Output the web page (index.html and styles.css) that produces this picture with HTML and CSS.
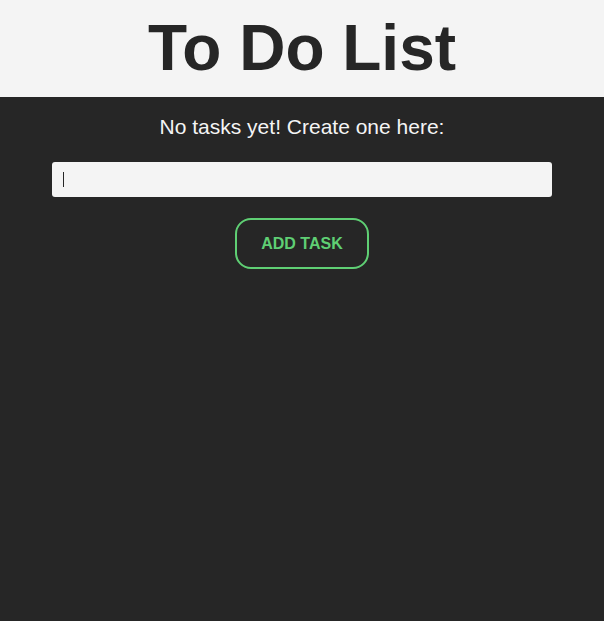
FILE: index.html
```html
<!DOCTYPE html>
<html>
<head>
<meta charset="utf-8">
<link rel="stylesheet" href="styles.css">
</head>
<body>
<header class="header">
  <h1 class="title">To Do List</h1>
</header>
<main class="main">
  <p class="empty">No tasks yet! Create one here:</p>
  <input class="task-input" type="text">
  <button class="add-btn" type="button">ADD TASK</button>
</main>
</body>
</html>
```

FILE: styles.css
```css
html, body {
  margin: 0;
  padding: 0;
  height: 100%;
}
body {
  background: #262626;
  font-family: "Liberation Sans", Arial, sans-serif;
}
.header {
  background: #f4f4f4;
  height: 97px;
  display: flex;
  align-items: center;
  justify-content: center;
}
.title {
  margin: 0;
  font-family: "Liberation Sans", Arial, sans-serif;
  font-size: 64px;
  font-weight: bold;
  color: #262626;
  line-height: 1;
  position: relative;
  top: -1px;
}
.main {
  display: flex;
  flex-direction: column;
  align-items: center;
  padding-top: 18px;
}
.empty {
  margin: 0;
  color: #f4f4f4;
  font-size: 21px;
  line-height: 24px;
}
.task-input {
  margin-top: 23px;
  width: 500px;
  height: 35px;
  box-sizing: border-box;
  border: none;
  border-radius: 3px;
  background: linear-gradient(#262626, #262626) no-repeat 11px 10px / 1px 15px, #f4f4f4;
  padding: 0 10px;
  font-family: "Liberation Sans", Arial, sans-serif;
  font-size: 16px;
  outline: none;
}
.add-btn {
  margin-top: 21px;
  width: 134px;
  height: 51px;
  box-sizing: border-box;
  background: transparent;
  border: 2px solid #5fcf74;
  border-radius: 16px;
  color: #5fcf74;
  font-family: "Liberation Sans", Arial, sans-serif;
  font-weight: bold;
  font-size: 16px;
  padding: 0;
  cursor: pointer;
}
```
